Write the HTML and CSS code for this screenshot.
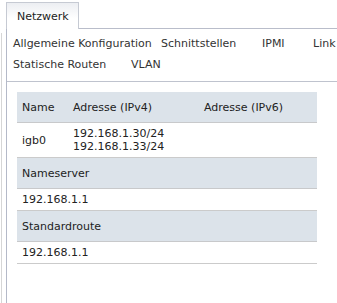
FILE: index.html
```html
<!DOCTYPE html>
<html>
<head>
<meta charset="utf-8">
<link rel="stylesheet" href="styles.css">
</head>
<body>
<div class="frame">
  <div class="edge"></div>
  <div class="panel">
    <div class="tabs">
      <div class="tab">Netzwerk</div>
      <div class="tab-fill"></div>
    </div>
    <div class="content">
      <div class="nav">
        <a class="link w-allg">Allgemeine Konfiguration</a>
        <a class="link w-schn">Schnittstellen</a>
        <a class="link w-ipmi">IPMI</a>
        <a class="link w-link">Link</a>
        <a class="link w-stat">Statische Routen</a>
        <a class="link">VLAN</a>
      </div>
      <div class="body">
        <table class="net">
          <colgroup>
            <col class="c1"><col class="c2"><col class="c3">
          </colgroup>
          <tr class="head">
            <td>Name</td><td>Adresse (IPv4)</td><td>Adresse (IPv6)</td>
          </tr>
          <tr class="row">
            <td class="mid">igb0</td><td>192.168.1.30/24<br>192.168.1.33/24</td><td></td>
          </tr>
          <tr class="head">
            <td colspan="3">Nameserver</td>
          </tr>
          <tr class="row">
            <td colspan="3">192.168.1.1</td>
          </tr>
          <tr class="head">
            <td colspan="3">Standardroute</td>
          </tr>
          <tr class="row">
            <td colspan="3">192.168.1.1</td>
          </tr>
        </table>
      </div>
    </div>
  </div>
</div>
</body>
</html>
```

FILE: styles.css
```css
html, body {
  margin: 0;
  padding: 0;
  background: #ffffff;
  overflow: hidden;
}
body {
  font-family: "DejaVu Sans", sans-serif;
  font-size: 11px;
  color: #333333;
}
.frame {
  display: flex;
  height: 303px;
  width: 337px;
  overflow: hidden;
}
.edge {
  width: 1px;
  margin-left: 1px;
  margin-top: 33px;
  background: #d6d6d6;
  flex: none;
}
.panel {
  margin-left: 4px;
  padding-top: 2px;
  flex: 1;
  min-width: 0;
  display: flex;
  flex-direction: column;
}
.tabs {
  display: flex;
  height: 27px;
  flex: none;
}
.tab {
  width: 71px;
  height: 26px;
  border: 1px solid #c6cad3;
  border-bottom: none;
  background: linear-gradient(#eceef2, #ffffff 60%);
  color: #222222;
  padding-left: 10px;
  box-sizing: border-box;
  width: 73px;
  height: 27px;
  line-height: 28px;
}
.tab-fill {
  flex: 1;
  border-bottom: 1px solid #b9bdca;
}
.content {
  flex: 1;
  border-left: 1px solid #b4b9c8;
}
.nav {
  width: 380px;
  display: flex;
  flex-wrap: wrap;
  padding: 4px 0 6px 6px;
  border-bottom: 1px solid #bfc3ce;
}
.link {
  display: block;
  height: 21px;
  line-height: 21px;
  color: #333333;
  white-space: nowrap;
}
.w-allg { width: 148px; }
.w-schn { width: 101px; }
.w-ipmi { width: 51px; }
.w-link { width: 70px; }
.w-stat { width: 118px; }
.body {
  padding: 10px 0 0 10px;
}
.net {
  width: 300px;
  border-collapse: collapse;
  table-layout: fixed;
  color: #222222;
}
.c1 { width: 51px; }
.c2 { width: 131px; }
.net td {
  padding: 0 0 0 5px;
  line-height: 13px;
  vertical-align: middle;
  white-space: nowrap;
}
.head td {
  background: #dce3ea;
  height: 30px;
  padding-top: 0;
  padding-bottom: 0;
  border-bottom: 1px solid #c8c9cb;
}
.row td {
  padding-top: 4px;
  padding-bottom: 4px;
  border-bottom: 1px solid #cbcbcb;
}
```
